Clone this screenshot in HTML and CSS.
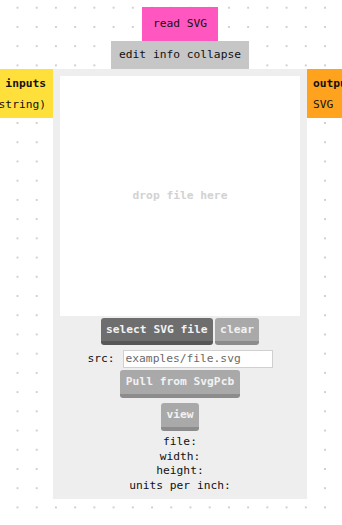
FILE: index.html
```html
<!DOCTYPE html>
<html lang="en">
<head>
    <meta charset="UTF-8">
    <meta name="viewport" content="width=device-width, initial-scale=1.0">
    <title>read SVG</title>
    <link rel="stylesheet" href="styles.css">
</head>
<body>
    <div class="canvas">
        <div class="node">
            <div class="node-title">read SVG</div>
            <div class="node-toolbar">edit info collapse</div>
            <div class="node-body">
                <div class="port port-in">
                    <div class="port-name">inputs</div>
                    <div class="port-type">(string)</div>
                </div>
                <div class="drop-zone">drop file here</div>
                <div class="actions">
                    <button class="btn btn-dark">select SVG file</button>
                    <button class="btn">clear</button>
                </div>
                <div class="src-row">
                    <label for="src">src:</label>
                    <input id="src" type="text" value="examples/file.svg">
                </div>
                <button class="btn btn-pull">Pull from SvgPcb</button>
                <button class="btn btn-view">view</button>
                <div class="info">
                    <div>file:</div>
                    <div>width:</div>
                    <div>height:</div>
                    <div>units per inch:</div>
                </div>
                <div class="port port-out">
                    <div class="port-name">outputs</div>
                    <div class="port-type">SVG</div>
                </div>
            </div>
        </div>
    </div>
</body>
</html>
```

FILE: styles.css
```css
html, body {
    margin: 0;
    padding: 0;
    width: 100%;
    height: 100%;
    overflow: hidden;
}

body {
    font-family: "DejaVu Sans Mono", monospace;
    font-size: 11.25px;
    line-height: 14px;
    color: #111;
    background-color: #fff;
    background-image: radial-gradient(circle, #cfcfcf 0.9px, transparent 1.2px);
    background-size: 19.23px 19.23px;
    background-position: 7.9px -1.9px;
}

.canvas {
    position: relative;
    width: 100%;
    height: 100%;
}

/* node sits on the free canvas */
.node {
    position: absolute;
    left: 53px;
    top: 7px;
    width: 254px;
    display: flex;
    flex-direction: column;
    align-items: center;
}

.node-title {
    background: #ff57bf;
    padding: 10px 10.5px;
}

.node-toolbar {
    background: #c6c6c6;
    padding: 7px 8px;
}

.node-body {
    position: relative;
    width: 100%;
    box-sizing: border-box;
    background: #eeeeee;
    padding: 7px 7px 6px;
    display: flex;
    flex-direction: column;
    align-items: center;
}

.drop-zone {
    width: 240px;
    height: 240px;
    background: #fff;
    display: flex;
    align-items: center;
    justify-content: center;
    color: #d2d2d2;
    font-weight: bold;
}

.port {
    position: absolute;
    top: 0;
    padding: 4px 7px 3px 6px;
    line-height: 21px;
    white-space: nowrap;
}

.port-name {
    font-weight: bold;
}

.port-in {
    right: 100%;
    background: #ffe03a;
    text-align: right;
}

.port-out {
    left: 100%;
    background: #ffa31e;
}

.btn {
    font-family: inherit;
    font-size: inherit;
    line-height: 14px;
    font-weight: bold;
    color: #f2f2f2;
    background: #a9a9a9;
    border: none;
    border-bottom: 4px solid #8c8c8c;
    border-radius: 3px;
    padding: 5px 5px 4px;
    margin: 0;
}

.btn-dark {
    background: #6e6e6e;
    border-bottom-color: #575757;
}

.actions {
    display: flex;
    gap: 2.5px;
    margin-top: 1.5px;
}

.src-row {
    display: flex;
    align-items: center;
    gap: 8px;
    margin-top: 5px;
}

.src-row input {
    width: 150px;
    height: 18px;
    box-sizing: border-box;
    border: 1px solid #d0d0d0;
    padding: 0 2px;
    font-family: inherit;
    font-size: inherit;
    color: #6a6a6a;
    background: #fff;
}

.btn-pull {
    margin-top: 2px;
    padding: 5px 6px;
}

.btn-view {
    margin-top: 5px;
    padding: 5px 5px;
}

.info {
    margin-top: 4.5px;
    text-align: center;
    line-height: 14.6px;
}
```
